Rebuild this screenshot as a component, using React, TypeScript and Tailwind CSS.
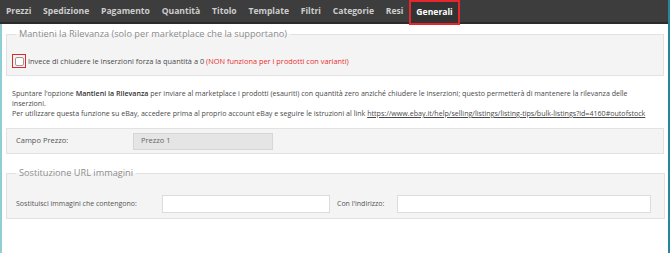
export default function App() {
  const tabs = ["Prezzi", "Spedizione", "Pagamento", "Quantità", "Titolo", "Template", "Filtri", "Categorie", "Resi"];
  return (
    <div className="w-[670px] h-[253px] flex bg-white overflow-hidden font-['Open_Sans',sans-serif]">
      <div className="flex-1 flex flex-col min-w-0">
        <div className="h-[24px] flex items-stretch bg-[#3d3d3d] border-b-2 border-[#2b2b2b]">
          {tabs.map((t) => (
            <div key={t} className="px-[5.9px] flex items-center text-[8.6px] font-bold text-[#cdcdcd] leading-none">
              {t}
            </div>
          ))}
          <div className="px-[5px] flex items-center text-[8.6px] font-bold text-white leading-none border-2 border-[#e5262c] bg-[#333333] h-[25px]">
            Generali
          </div>
        </div>
        <div className="flex-1 border-l-2 border-[#8fcfd3] flex flex-col">
          <fieldset className="mx-[4px] mt-[4px] border border-[#e2e2e2] bg-[#f4f4f4] px-[5px] pb-[7px]">
            <legend className="ml-[4px] px-[3px] text-[9.2px] leading-[12px] text-[#8c8c8c]">
              Mantieni la Rilevanza (solo per marketplace che la supportano)
            </legend>
            <div className="mt-[14px] flex items-center gap-[2px]">
              <div className="w-[14px] h-[14px] border border-[#e3262b] flex items-center justify-center">
                <div className="w-[9px] h-[9px] border border-[#9a9a9a] bg-white rounded-[2px]" />
              </div>
              <span className="text-[7.4px] leading-[10px] text-[#4a4a4a]">
                Invece di chiudere le inserzioni forza la quantità a 0{" "}
                <span className="text-[#e8302e]">(NON funziona per i prodotti con varianti)</span>
              </span>
            </div>
          </fieldset>
          <div className="mt-[12px] ml-[10px] mr-[10px] text-[7.1px] leading-[10px] text-[#4a4a4a]">
            <p>
              Spuntare l'opzione <span className="font-semibold text-[#333]">Mantieni la Rilevanza</span> per inviare al marketplace i prodotti (esauriti) con quantità zero anziché chiudere le inserzioni; questo permetterà di mantenere la rilevanza delle inserzioni.
            </p>
            <p className="whitespace-nowrap">
              Per utilizzare questa funzione su eBay, accedere prima al proprio account eBay e seguire le istruzioni al link{" "}
              <span className="underline">https://www.ebay.it/help/selling/listings/listing-tips/bulk-listings?id=4160#outofstock</span>
            </p>
          </div>
          <div className="mx-[4px] mt-[10px] h-[26px] border border-[#e2e2e2] bg-[#f4f4f4] pl-[9px] flex items-center">
            <span className="w-[117px] text-[7.5px] text-[#555]">Campo Prezzo:</span>
            <div className="w-[140px] h-[17px] border border-[#d6d6d6] bg-[#e5e5e5] pl-[7px] flex items-center text-[7.5px] text-[#666]">
              Prezzo 1
            </div>
          </div>
          <fieldset className="mx-[4px] mt-[13px] mr-[3px] border border-[#e2e2e2] bg-[#f4f4f4] px-[9px] pb-[5px]">
            <legend className="px-[3px] text-[9.2px] leading-[12px] text-[#8c8c8c]">
              Sostituzione URL immagini
            </legend>
            <div className="mt-[16px] flex items-center">
              <span className="w-[146px] text-[7px] text-[#555]">Sostituisci immagini che contengono:</span>
              <div className="w-[168px] h-[18px] border border-[#dcdcdc] bg-white" />
              <span className="ml-[7px] w-[60px] text-[7px] text-[#555]">Con l'indirizzo:</span>
              <div className="w-[254px] h-[18px] border border-[#dcdcdc] bg-white" />
            </div>
          </fieldset>
        </div>
      </div>
      <div className="w-[2px] bg-[#23899a]" />
    </div>
  );
}
